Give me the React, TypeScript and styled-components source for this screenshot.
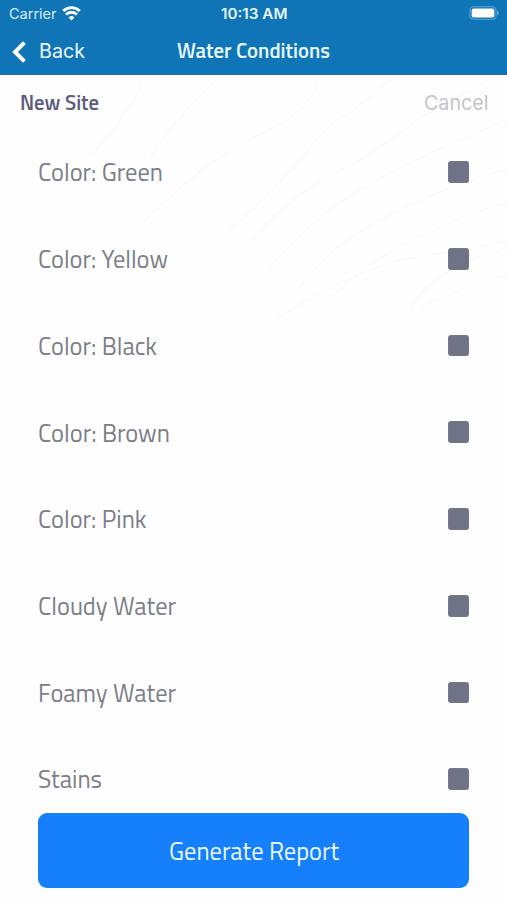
import React, { useLayoutEffect, useRef, useState } from "react";
import styled, { createGlobalStyle } from "styled-components";

const GlobalStyle = createGlobalStyle`
  * { box-sizing: border-box; }
  html, body { margin: 0; padding: 0; background: #fefefe; overflow: hidden; }
  button { border: 0; padding: 0; margin: 0; background: none; cursor: pointer; }
`;

const condensedStack = `"Titillium Web", Roboto, "Liberation Sans", sans-serif`;
const systemStack = `Inter, "Liberation Sans", sans-serif`;

const Screen = styled.main`
  position: relative;
  display: flex;
  flex-direction: column;
  width: 507px;
  height: 900px;
  overflow: hidden;
  background: #fefefe;
  font-family: ${condensedStack};
`;

const Header = styled.header`
  flex: none;
  height: 75.3px;
  background: #1075b7;
  color: #fff;
`;

const StatusBar = styled.div`
  display: grid;
  grid-template-columns: 1fr auto 1fr;
  align-items: center;
  height: 28px;
  padding: 0 8px 0 9px;
  font-family: ${systemStack};
`;

const Carrier = styled.div`
  display: flex;
  align-items: center;
  gap: 5px;
  color: #d9f0fb;
`;

const BatterySlot = styled.div`
  display: flex;
  justify-content: flex-end;
  padding-bottom: 2px;
`;

const NavBar = styled.nav`
  display: grid;
  grid-template-columns: 1fr auto 1fr;
  align-items: center;
  height: 45px;
  padding: 0 12px;
`;

const BackButton = styled.button`
  display: flex;
  align-items: center;
  gap: 13px;
  padding-top: 2px;
  color: #eef9ff;
  font-family: ${systemStack};
`;

const SiteBar = styled.div`
  position: relative;
  flex: none;
  display: flex;
  justify-content: space-between;
  align-items: center;
  height: 55px;
  padding: 0 18.5px 0 19.5px;
`;

const CancelButton = styled.button`
  color: #c3c5cd;
  font-family: ${systemStack};
`;

const List = styled.ul`
  position: relative;
  flex: none;
  height: 682px;
  margin: -1.5px 0 0;
  padding: 0;
  list-style: none;
  overflow: hidden;
`;

const Row = styled.li`
  display: flex;
  justify-content: space-between;
  align-items: center;
  height: 86.72px;
  padding: 0 37.8px 0 37.5px;
  color: #7c7e89;
`;

const RowLabel = styled.div`
  padding-top: 1px;
`;

const Checkbox = styled.span`
  width: 21.7px;
  height: 21.7px;
  border: 1px solid #777783;
  border-radius: 2.5px;
  background: #6e7387;
`;

const ReportButton = styled.button`
  position: relative;
  flex: none;
  display: flex;
  align-items: center;
  justify-content: center;
  height: 75px;
  margin: 1.8px 37.7px 0 38.3px;
  border-radius: 9px;
  background: #167ffc;
  color: #e9f8ff;
  padding-top: 2px;
  font-family: ${condensedStack};
`;

const Backdrop = styled.svg`
  position: absolute;
  left: 0;
  top: 0;
`;

const TextBox = styled.span<{ $width: number; $size: number; $weight: number; $color?: string }>`
  display: block;
  width: ${(p) => p.$width}px;
  font-size: ${(p) => p.$size}px;
  font-weight: ${(p) => p.$weight};
  line-height: 1.2;
  text-align: left;
  color: ${(p) => p.$color ?? "inherit"};
`;

const TextRun = styled.span`
  display: inline-block;
  white-space: nowrap;
  transform-origin: left center;
`;

type FitTextProps = { width: number; size: number; weight?: number; color?: string; children: string };

/* Sets one line of text at a fixed measure by condensing or widening it. */
function FitText({ width, size, weight = 400, color, children }: FitTextProps) {
  const ref = useRef<HTMLSpanElement>(null);
  const [scale, setScale] = useState(1);
  useLayoutEffect(() => {
    const natural = ref.current?.getBoundingClientRect().width;
    if (natural) setScale((previous) => (width * previous) / natural);
  }, [width, size, weight, children]);
  return (
    <TextBox $width={width} $size={size} $weight={weight} $color={color}>
      <TextRun ref={ref} style={{ transform: `scaleX(${scale})` }}>{children}</TextRun>
    </TextBox>
  );
}

const conditions = [
  { label: "Color: Green", width: 125 },
  { label: "Color: Yellow", width: 130 },
  { label: "Color: Black", width: 119 },
  { label: "Color: Brown", width: 132 },
  { label: "Color: Pink", width: 108.5 },
  { label: "Cloudy Water", width: 138 },
  { label: "Foamy Water", width: 138 },
  { label: "Stains", width: 64 },
];

const contours = [
  "M92 155 Q122 122 142 84",
  "M150 160 Q165 130 180 118 Q195 100 215 81",
  "M140 226 Q180 185 225 153 Q268 131 285 121 Q308 107 318 84",
  "M229 230 Q276 190 310 148 Q325 126 347 114 Q372 97 390 80",
  "M253 240 Q290 193 350 166 Q395 137 425 115 Q460 98 487 80",
  "M270 268 Q310 217 374 182 Q430 151 507 120",
  "M298 290 Q333 240 400 210 Q450 185 507 169",
  "M331 298 Q370 258 430 232 Q465 213 507 203",
  "M277 318 Q345 276 400 260 Q450 252 507 241",
  "M411 306 Q425 283 464 263 Q480 255 507 248",
  "M420 308 Q465 285 507 275",
];

function WifiIcon() {
  return (
    <svg width="19" height="15" viewBox="0 0 19 15" fill="none" stroke="#fff" strokeWidth="2.9">
      <path d="M1.2 5.1a11.7 11.7 0 0 1 16.6 0" />
      <path d="M4 8.6a7.7 7.7 0 0 1 11 0" />
      <path d="M9.5 14.4 6.6 11.5a4.1 4.1 0 0 1 5.8 0Z" fill="#fff" stroke="none" />
    </svg>
  );
}

function BatteryIcon() {
  return (
    <svg width="30" height="14" viewBox="0 0 30 14" fill="none">
      <rect x="1" y="0.7" width="26" height="12.6" rx="3.6" stroke="#58a5d4" strokeWidth="1.1" />
      <rect x="2.7" y="2.4" width="22.6" height="9.2" rx="1.8" fill="#fff" />
      <path d="M28.2 4.8q1.6.7 1.6 2.2t-1.6 2.2Z" fill="#69b1db" />
    </svg>
  );
}

export default function App() {
  return (
    <>
      <GlobalStyle />
      <Screen>
        <Backdrop width="507" height="340" viewBox="0 0 507 340" fill="none" stroke="#fafafb" strokeWidth="1.6">
          {contours.map((d) => <path key={d} d={d} />)}
        </Backdrop>
        <Header>
          <StatusBar>
            <Carrier>
              <FitText width={47.5} size={14}>Carrier</FitText>
              <WifiIcon />
            </Carrier>
            <FitText width={66.5} size={13.8} weight={600} color="#e6f7ff">10:13 AM</FitText>
            <BatterySlot><BatteryIcon /></BatterySlot>
          </StatusBar>
          <NavBar>
            <BackButton>
              <svg width="14" height="22" viewBox="0 0 14 22" fill="none" stroke="#fff" strokeWidth="4">
                <path d="M12.4 1.7 3 11l9.4 9.3" />
              </svg>
              <FitText width={46} size={19.8}>Back</FitText>
            </BackButton>
            <FitText width={153} size={21.2} weight={600} color="#e9f8ff">Water Conditions</FitText>
          </NavBar>
        </Header>
        <SiteBar>
          <FitText width={79} size={20.8} weight={600} color="#5c5b7c">New Site</FitText>
          <CancelButton>
            <FitText width={64.5} size={20.4}>Cancel</FitText>
          </CancelButton>
        </SiteBar>
        <List>
          {conditions.map(({ label, width }) => (
            <Row key={label}>
              <RowLabel><FitText width={width} size={25.4}>{label}</FitText></RowLabel>
              <Checkbox role="checkbox" aria-checked="false" aria-label={label} />
            </Row>
          ))}
        </List>
        <ReportButton>
          <FitText width={170} size={25.2}>Generate Report</FitText>
        </ReportButton>
      </Screen>
    </>
  );
}
